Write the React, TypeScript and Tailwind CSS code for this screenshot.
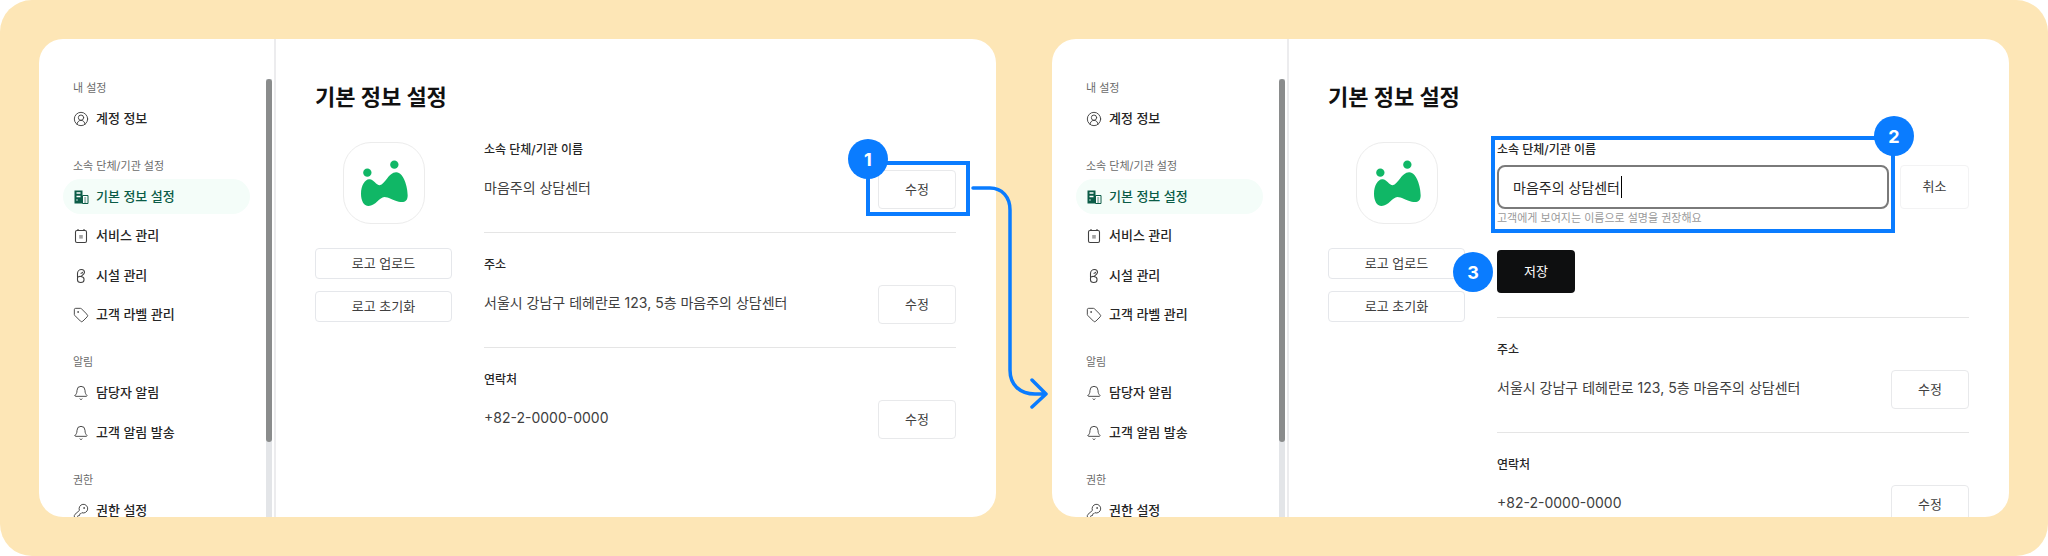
import React from 'react';
import { Bell, CircleUserRound, KeyRound, Tag } from 'lucide-react';

const BuildingIcon = () => (
  <svg viewBox="0 0 16 16" className="w-4 h-4 shrink-0">
    <path d="M1.5 1.5h8v13h-8z" fill="#0b5c47" />
    <path d="M3.5 4h4M3.5 7.5h4M3.5 11h1" stroke="#fff" strokeWidth="1.4" fill="none" />
    <path d="M9.5 6.5h5.5v8H9.5z" fill="#fff" stroke="#0b5c47" strokeWidth="1" />
    <path d="M11.2 9h2M11.2 11h2M11.2 13h2" stroke="#0b5c47" strokeWidth="0.8" />
  </svg>
);

const ServiceIcon = () => (
  <svg viewBox="0 0 16 16" className="w-4 h-4 shrink-0" fill="none" stroke="#404040" strokeWidth="1.1">
    <rect x="2.5" y="2.5" width="11" height="12" rx="1.5" />
    <path d="M5 1v2M11 1v2" />
    <rect x="6.2" y="7" width="3.6" height="3.6" fill="#a3a3a3" stroke="none" />
  </svg>
);

const FacilityIcon = () => (
  <svg viewBox="0 0 16 16" className="w-4 h-4 shrink-0" fill="none" stroke="#404040" strokeWidth="1.1" strokeLinecap="round">
    <path d="M4.5 9.5V5.5C4.5 3 6.5 1.5 8.5 1.5s3 1.600 3 3c0 1.500-1.500 2.500-3.500 4" />
    <path d="M8 5.200c1 0 1.500-.3 1.500-1" />
    <path d="M4.500 10c0-1.200 1.500-1.800 3.500-1.500 1.800.3 3 1 3 2.500v1c0 1.500-1.200 2.500-3.200 2.500s-3.300-1-3.300-2.500z" />
  </svg>
);

type Item = { label: string; icon: React.ReactNode; active?: boolean };
type Section = { title: string; items: Item[] };

const lucideClass = 'w-4 h-4 shrink-0 text-[#404040]';

const sections: Section[] = [
  { title: '내 설정', items: [{ label: '계정 정보', icon: <CircleUserRound className={lucideClass} strokeWidth={1.4} /> }] },
  {
    title: '소속 단체/기관 설정',
    items: [
      { label: '기본 정보 설정', icon: <BuildingIcon />, active: true },
      { label: '서비스 관리', icon: <ServiceIcon /> },
      { label: '시설 관리', icon: <FacilityIcon /> },
      { label: '고객 라벨 관리', icon: <Tag className={lucideClass} strokeWidth={1.4} /> },
    ],
  },
  {
    title: '알림',
    items: [
      { label: '담당자 알림', icon: <Bell className={lucideClass} strokeWidth={1.4} /> },
      { label: '고객 알림 발송', icon: <Bell className={lucideClass} strokeWidth={1.4} /> },
    ],
  },
  { title: '권한', items: [{ label: '권한 설정', icon: <KeyRound className={lucideClass} strokeWidth={1.4} /> }] },
];

const Sidebar = () => (
  <aside className="relative w-[237px] shrink-0 border-r-2 border-[#ececee] pt-[40.5px]">
    {sections.map((section, i) => (
      <div key={section.title} className={i > 0 ? 'mt-[21.5px]' : ''}>
        <div className="h-4 pl-[34px] text-[11px] leading-4 text-[#6b6b6b] mb-[5.5px]">{section.title}</div>
        <div className="flex flex-col gap-[4.5px]">
          {section.items.map((item) => (
            <div
              key={item.label}
              className={`ml-[24px] w-[187px] h-[35px] shrink-0 rounded-full pl-[10px] flex items-center gap-[7px] text-[13px] font-medium ${
                item.active ? 'bg-[#f4fdf9] text-[#0b5c47]' : 'text-[#262626]'
              }`}
            >
              {item.icon}
              <span>{item.label}</span>
            </div>
          ))}
        </div>
      </div>
    ))}
    <div className="absolute top-[40px] bottom-0 right-[2px] w-[6px] bg-[#e3e5e8]" />
    <div className="absolute top-[40px] h-[363px] right-[2px] w-[6px] rounded-full bg-[#8a8c8c]" />
  </aside>
);

const OutlineButton = ({ label, className }: { label: string; className: string }) => (
  <button className={`shrink-0 rounded-[4px] border bg-white text-[13px] text-[#404040] ${className}`}>
    {label}
  </button>
);

const LogoColumn = () => (
  <div className="w-[137px] shrink-0 pt-[3px] flex flex-col items-center">
    <div className="w-[82px] h-[82px] rounded-[28px] border border-[#ececec] flex items-center justify-center">
      <svg viewBox="200 293 162 150" className="w-[54px] h-[50px]">
        <circle cx="231" cy="337" r="12.500" fill="#10b766" />
        <circle cx="312" cy="313" r="12.500" fill="#10b766" />
        <path
          d="M212 400C212 375 225 355 238 357C250 358 258 375 268 375C285 372 295 335 318 336C340 337 352 380 352 405C352 425 340 427 325 424C305 420 295 410 282 410C268 410 255 437 235 437C220 437 212 420 212 400Z"
          fill="#10b766"
        />
      </svg>
    </div>
    <OutlineButton label="로고 업로드" className="w-full h-[31px] mt-6 border-[#e5e7eb]" />
    <OutlineButton label="로고 초기화" className="w-full h-[31px] mt-3 border-[#e5e7eb]" />
  </div>
);

const InfoRow = ({ label, value, last }: { label: string; value: string; last?: boolean }) => (
  <div className={last ? 'pt-[21px]' : 'pt-[21px] pb-[23px] border-b border-[#e5e5e5]'}>
    <div className="h-5 text-[12px] leading-5 font-medium text-[#262626] translate-y-px">{label}</div>
    <div className="mt-[11px] flex items-center justify-between">
      <span className="text-[14px] text-[#404040] -mt-1">{value}</span>
      <OutlineButton label="수정" className="w-[78px] h-[39px] border-[#e8e9eb]" />
    </div>
  </div>
);

const EditRow = () => (
  <div className="pb-6 border-b border-[#e5e5e5]">
    <div className="h-5 text-[12px] leading-5 font-medium text-[#262626] translate-y-px">소속 단체/기관 이름</div>
    <div className="mt-[6px] flex justify-between">
      <div className="w-[392px] h-11 rounded-lg border-2 border-[#7a7a7a] pl-[14px] flex items-center text-[14px] text-[#262626]">
        <span>마음주의 상담센터</span>
        <span className="ml-px w-px h-[22px] bg-black" />
      </div>
      <OutlineButton label="취소" className="w-[69px] h-11 border-[#f3f3f4]" />
    </div>
    <div className="mt-[2px] h-[14px] text-[11px] leading-[14px] text-[#9a9a9a]">고객에게 보여지는 이름으로 설명을 권장해요</div>
    <button className="mt-[25px] w-[78px] h-[43px] rounded-[4px] bg-[#0e0f10] text-[13px] text-white">저장</button>
  </div>
);

const Panel = ({ editing }: { editing?: boolean }) => (
  <div className="w-[957px] h-[478px] shrink-0 rounded-[24px] bg-white overflow-hidden flex">
    <Sidebar />
    <main className="flex-1 min-w-0 pl-[39px] pr-[40px] pt-[42px]">
      <h1 className="h-8 text-[22px] leading-8 font-bold text-[#111]">기본 정보 설정</h1>
      <div className="mt-[26px] flex gap-8">
        <LogoColumn />
        <div className="flex-1 min-w-0">
          {editing ? (
            <EditRow />
          ) : (
            <div className="-mt-[21px]">
              <InfoRow label="소속 단체/기관 이름" value="마음주의 상담센터" />
            </div>
          )}
          <InfoRow label="주소" value="서울시 강남구 테헤란로 123, 5층 마음주의 상담센터" />
          <InfoRow label="연락처" value="+82-2-0000-0000" last />
        </div>
      </div>
    </main>
  </div>
);

const Badge = ({ n, className }: { n: number; className: string }) => (
  <div className={`absolute w-10 h-10 rounded-full bg-[#0a7cff] text-white text-[18px] font-bold flex items-center justify-center ${className}`}>
    {n}
  </div>
);

export default function App() {
  return (
    <div
      className="relative w-[2048px] h-[556px] rounded-[32px] bg-[#fde6b6] p-[39px] flex gap-[56px] overflow-hidden"
      style={{ fontFamily: 'Inter, "Noto Sans CJK KR", sans-serif' }}
    >
      <Panel />
      <Panel editing />

      <div className="absolute left-[866px] top-[161px] w-[104px] h-[55px] border-4 border-[#0a7cff]" />
      <Badge n={1} className="left-[848px] top-[139px]" />

      <svg className="absolute left-[960px] top-[170px] w-[100px] h-[250px]" viewBox="960 170 100 250" fill="none">
        <path
          d="M973 188H990C1002 188 1010 197 1010 210V370C1010 385 1020 394 1035 394H1046M1032 380L1046 394L1032 407"
          stroke="#0a7cff"
          strokeWidth="3.500"
          strokeLinecap="round"
          strokeLinejoin="round"
        />
      </svg>

      <div className="absolute left-[1491px] top-[136px] w-[404px] h-[97px] border-4 border-[#0a7cff]" />
      <Badge n={2} className="left-[1874px] top-[116px]" />
      <Badge n={3} className="left-[1453px] top-[252px]" />
    </div>
  );
}
